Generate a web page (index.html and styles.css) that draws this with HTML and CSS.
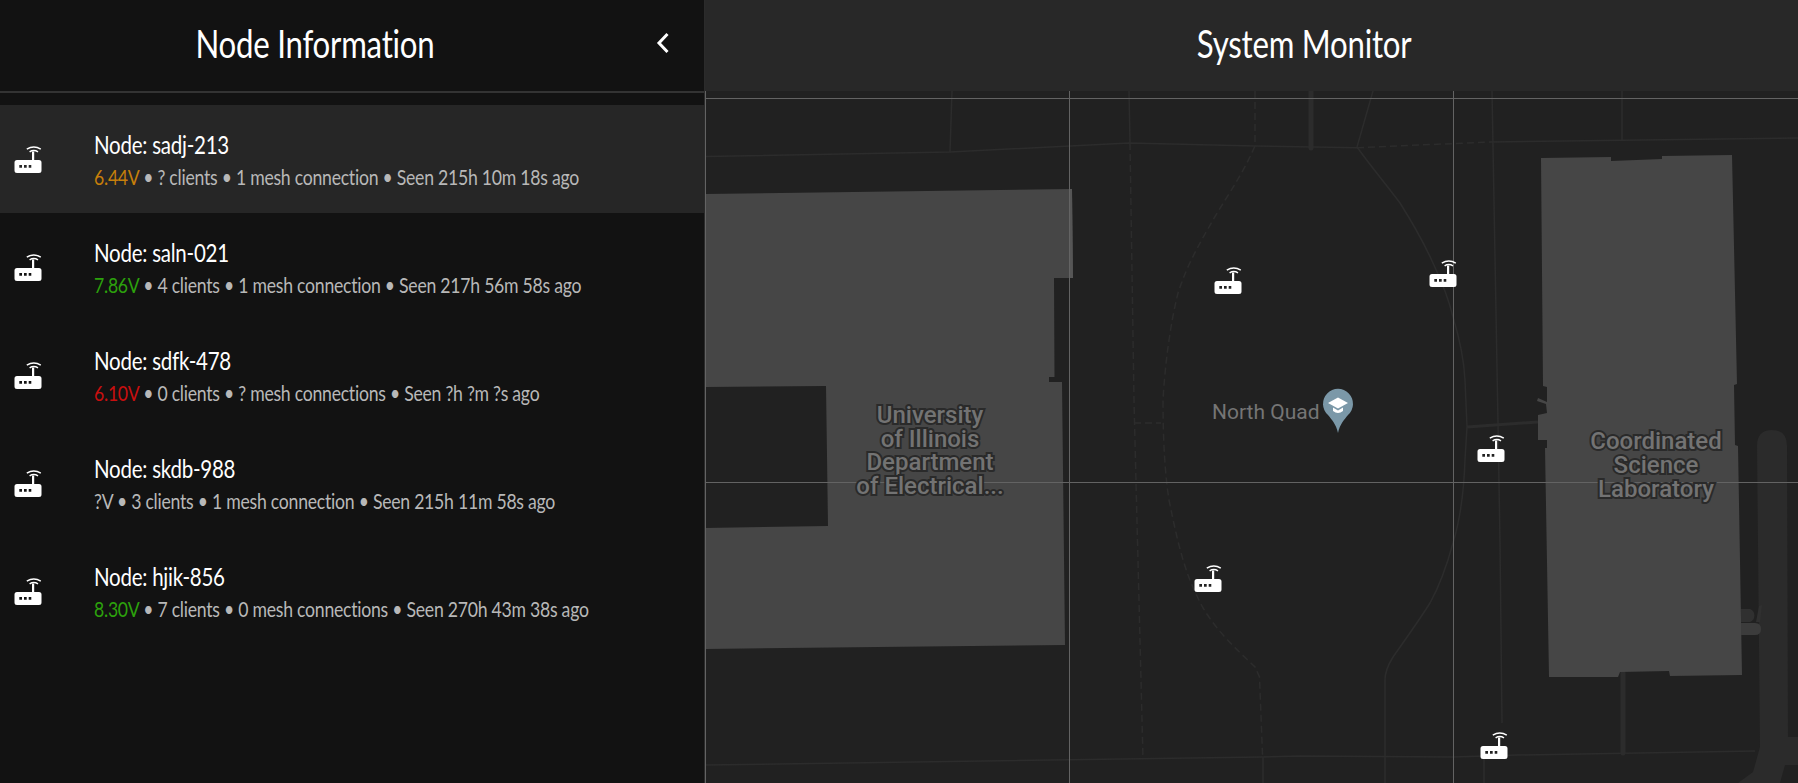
FILE: index.html
```html
<!DOCTYPE html>
<html lang="en">
<head>
    <meta charset="UTF-8">
    <meta name="viewport" content="width=device-width, initial-scale=1.0">
    <title>System Monitor</title>
    <link rel="stylesheet" href="styles.css">
</head>
<body>
    <svg class="defs" width="0" height="0" aria-hidden="true">
        <symbol id="router" viewBox="0 0 28 27">
            <path fill="#fff" fill-rule="evenodd" d="M3 14H18V5.5H20.2V14H25A2.5 2.5 0 0 1 27.5 16.5V24.5A2.5 2.5 0 0 1 25 27H3A2.5 2.5 0 0 1 .5 24.5V16.5A2.5 2.5 0 0 1 3 14ZM5.3 19V21.7H8V19ZM10 19V21.7H12.7V19ZM14.7 19V21.7H17.3V19Z"/>
            <path fill="none" stroke="#fff" stroke-width="1.5" d="M12.8 3.2Q19.8 -1 26.8 3.2M15.6 5.9Q19.8 3.2 24 5.9"/>
        </symbol>
    </svg>

    <div class="container">
        <!-- left: node list -->
        <aside class="node-panel">
            <header class="panel-head">
                <h1 class="node-title">Node Information</h1>
                <svg class="chevron" width="14" height="22" viewBox="0 0 14 22"><path d="M11.500 2L3 11L11.500 20" fill="none" stroke="#fff" stroke-width="3"/></svg>
            </header>
            <ul class="node-list">
                <li class="node active">
                    <svg class="node-icon"><use href="#router"/></svg>
                    <div class="node-text">
                        <div class="node-name">Node: sadj-213</div>
                        <div class="node-meta"><span class="warn">6.44V</span> • ? clients • 1 mesh connection • Seen 215h 10m 18s ago</div>
                    </div>
                </li>
                <li class="node">
                    <svg class="node-icon"><use href="#router"/></svg>
                    <div class="node-text">
                        <div class="node-name">Node: saln-021</div>
                        <div class="node-meta"><span class="good">7.86V</span> • 4 clients • 1 mesh connection • Seen 217h 56m 58s ago</div>
                    </div>
                </li>
                <li class="node">
                    <svg class="node-icon"><use href="#router"/></svg>
                    <div class="node-text">
                        <div class="node-name">Node: sdfk-478</div>
                        <div class="node-meta"><span class="bad">6.10V</span> • 0 clients • ? mesh connections • Seen ?h ?m ?s ago</div>
                    </div>
                </li>
                <li class="node">
                    <svg class="node-icon"><use href="#router"/></svg>
                    <div class="node-text">
                        <div class="node-name">Node: skdb-988</div>
                        <div class="node-meta">?V • 3 clients • 1 mesh connection • Seen 215h 11m 58s ago</div>
                    </div>
                </li>
                <li class="node">
                    <svg class="node-icon"><use href="#router"/></svg>
                    <div class="node-text">
                        <div class="node-name">Node: hjik-856</div>
                        <div class="node-meta"><span class="good">8.30V</span> • 7 clients • 0 mesh connections • Seen 270h 43m 38s ago</div>
                    </div>
                </li>
            </ul>
        </aside>

        <!-- right: map -->
        <main class="monitor">
            <header class="monitor-head">
                <h1 class="monitor-title">System Monitor</h1>
            </header>
            <svg class="map" viewBox="705 91 1093 692" preserveAspectRatio="none">
                <!-- roads -->
                <path class="road" d="M705 156.5L950 152L1129 143L1255 146L1357 147.7"/>
                <path class="road dash" d="M1357 147.7L1490 142"/>
                <path class="road" d="M1490 142L1798 138"/>
                <path class="road" d="M952 91L950 152M1129 91L1130 143M1622 91L1622 140"/>
                <path class="road dash" d="M1130 143L1134 400L1136 482L1143 759M1255 91V146M1134 423H1161"/>
                <path class="road dash" d="M1255 146C1240 180 1222 203 1209 227C1190 260 1184 275 1178 293C1170 325 1165 365 1163 400C1163 440 1165 475 1169 500C1178 545 1185 572 1197.5 597C1210 625 1235 648 1255 667L1259.5 677L1262.6 757"/>
                <path class="road" d="M705 765L1262 757L1300 756L1453 757L1517 755L1755 751M1263 757V783M1484 758V783"/>
                <path class="road" d="M1373 91L1357 147C1372 168 1386 184 1400 203C1412 222 1424 243 1433 263C1442 282 1449 300 1453 317C1460 340 1464 360 1465 380L1467 427L1465 460C1464 490 1460 520 1453 543C1447 565 1440 585 1430 603C1418 622 1405 640 1393 657C1388 665 1385 672 1385 680V783"/>
                <path class="road" d="M1492 91L1498 423L1500 543L1502 723"/>
                <path class="road wide" d="M1467 427L1538 422"/>
                <path class="road thick" d="M1311 91V148M1623 673V753"/>
                <path class="road-fill" d="M1757 446Q1757 430 1772 430Q1787 430 1787 446L1788 737H1798V765H1785L1780 783H1738L1753 772L1760 747Z"/>

                <!-- buildings -->
                <path class="building" d="M705 194L1072 189L1073 278H1054L1054.5 377H1049V382H1062L1065 645L705 649V528L828 526L826 386L705 387Z"/>
                <path class="building-edge" d="M1069 189.1L1072 189L1073 278H1069Z"/>
                <path class="building" d="M1541 158L1611 157V161L1662 159V156L1732 155L1737 384L1734 385L1735 445L1738 446L1742 675L1670 676L1669 671L1620 672L1618 677L1549 677L1545 448H1547V440H1538V415L1547 413L1546 404L1537 401L1538 398L1547 402V387L1543 386Z"/>
                <path class="annex dark" d="M1741 609H1750A7 7 0 0 1 1750 622H1741Z"/>
                <path class="annex" d="M1741 623H1755Q1761 623 1761 629Q1761 635 1755 635H1741Z"/>
                <path class="annex dark" d="M1756 622L1759 606L1762 605L1760 622Z"/>

                <!-- tile grid -->
                <path class="grid" d="M705.5 91V783M705 98.5H1798M705 482.5H1798M1069.5 91V783M1453.5 91V783"/>

                <!-- labels -->
                <text class="label" text-anchor="middle" x="930" y="423">University</text>
                <text class="label" text-anchor="middle" x="930" y="447">of Illinois</text>
                <text class="label" text-anchor="middle" x="930" y="470">Department</text>
                <text class="label" text-anchor="middle" x="930" y="494">of Electrical...</text>
                <text class="label" text-anchor="middle" x="1656" y="449">Coordinated</text>
                <text class="label" text-anchor="middle" x="1656" y="473">Science</text>
                <text class="label" text-anchor="middle" x="1656" y="497">Laboratory</text>
                <text class="poi" x="1212" y="419">North Quad</text>

                <!-- school pin -->
                <path class="pin" d="M1338 433C1336 424 1332 420 1328 415A15 15 0 1 1 1348 415C1344 420 1340 424 1338 433Z"/>
                <path fill="#fff" d="M1338 397.5L1348 403L1338 408.500L1328 403ZM1333 407.500L1338 410.500L1343 407.500V411Q1338 415 1333 411Z"/>

                <!-- nodes -->
                <use href="#router" x="1214" y="267" width="28" height="27"/>
                <use href="#router" x="1429" y="260" width="28" height="27"/>
                <use href="#router" x="1477" y="435" width="28" height="27"/>
                <use href="#router" x="1194" y="565" width="28" height="27"/>
                <use href="#router" x="1480" y="732" width="28" height="27"/>
            </svg>
        </main>
    </div>
</body>
</html>
```

FILE: styles.css
```css
/* page */
body, html {
    margin: 0;
    padding: 0;
    height: 100%;
    overflow: hidden;
    background-color: #121212;
    font-family: 'Lato', 'Liberation Sans', sans-serif;
}

.defs {
    position: absolute;
}

.container {
    display: flex;
    height: 100vh;
}

/* left panel */
.node-panel {
    width: 705px;
    flex-shrink: 0;
    box-sizing: border-box;
    border-right: 1px solid #2b2b2b;
    background: #121212;
}

.panel-head {
    display: flex;
    align-items: center;
    height: 91px;
    border-bottom: 2px solid #333;
}

/* no narrow font is installed, so the text is squeezed */
.node-title,
.monitor-title {
    margin: 0 0 5px;
    color: #fff;
    font-size: 39px;
    font-weight: 400;
    letter-spacing: -0.3px;
    transform: scaleX(0.8);
}

.node-title {
    width: 630px;
    flex-shrink: 0;
    text-align: center;
}

.chevron {
    margin: -5px 0 0 26px;
}

.node-list {
    list-style: none;
    margin: 0;
    padding: 12px 0 0;
}

.node {
    display: flex;
    align-items: center;
    height: 108px;
    padding-left: 14px;
}

.node.active {
    background: #262626;
}

.node-icon {
    width: 28px;
    height: 27px;
    flex-shrink: 0;
    margin-right: 52px;
}

.node-text {
    padding-top: 3px;
    white-space: nowrap;
}

.node-name {
    color: #fff;
    font-size: 25px;
    font-weight: 400;
    letter-spacing: -0.3px;
    line-height: 32px;
    transform: scaleX(0.82);
    transform-origin: left;
}

.node-meta {
    color: #b8b8b8;
    font-size: 21px;
    font-weight: 400;
    letter-spacing: -0.3px;
    line-height: 33px;
    transform: scaleX(0.84);
    transform-origin: left;
}

.warn { color: #c77f0a; }
.good { color: #2ca10c; }
.bad { color: #c80f0f; }

/* right panel */
.monitor {
    flex: 1;
    display: flex;
    flex-direction: column;
    min-width: 0;
}

.monitor-head {
    display: flex;
    align-items: center;
    justify-content: center;
    height: 91px;
    padding-left: 106px;
    background: #282828;
}

.map {
    display: block;
    flex: 1;
    min-height: 0;
    width: 100%;
    background: #212121;
}

.road {
    fill: none;
    stroke: #2c2c2c;
    stroke-width: 1.5;
}

.road.dash {
    stroke-dasharray: 7 4;
}

.road.wide {
    stroke-width: 3;
}

.road.thick {
    stroke-width: 5;
    stroke-linecap: round;
}

.road-fill {
    fill: #2b2b2b;
}

.building {
    fill: #464646;
}

.building-edge {
    fill: #565656;
}

.annex {
    fill: #3c3c3c;
}

.annex.dark {
    fill: #303030;
}

.grid {
    fill: none;
    stroke: #636363;
    stroke-width: 1;
}

.label {
    font-family: 'Roboto', sans-serif;
    font-size: 24px;
    font-weight: 500;
    fill: #737373;
    stroke: #2a2a2a;
    stroke-width: 4px;
    paint-order: stroke;
}

.poi {
    font-family: 'Roboto', sans-serif;
    font-size: 21px;
    fill: #757575;
}

.pin {
    fill: #7b98a8;
}
```
